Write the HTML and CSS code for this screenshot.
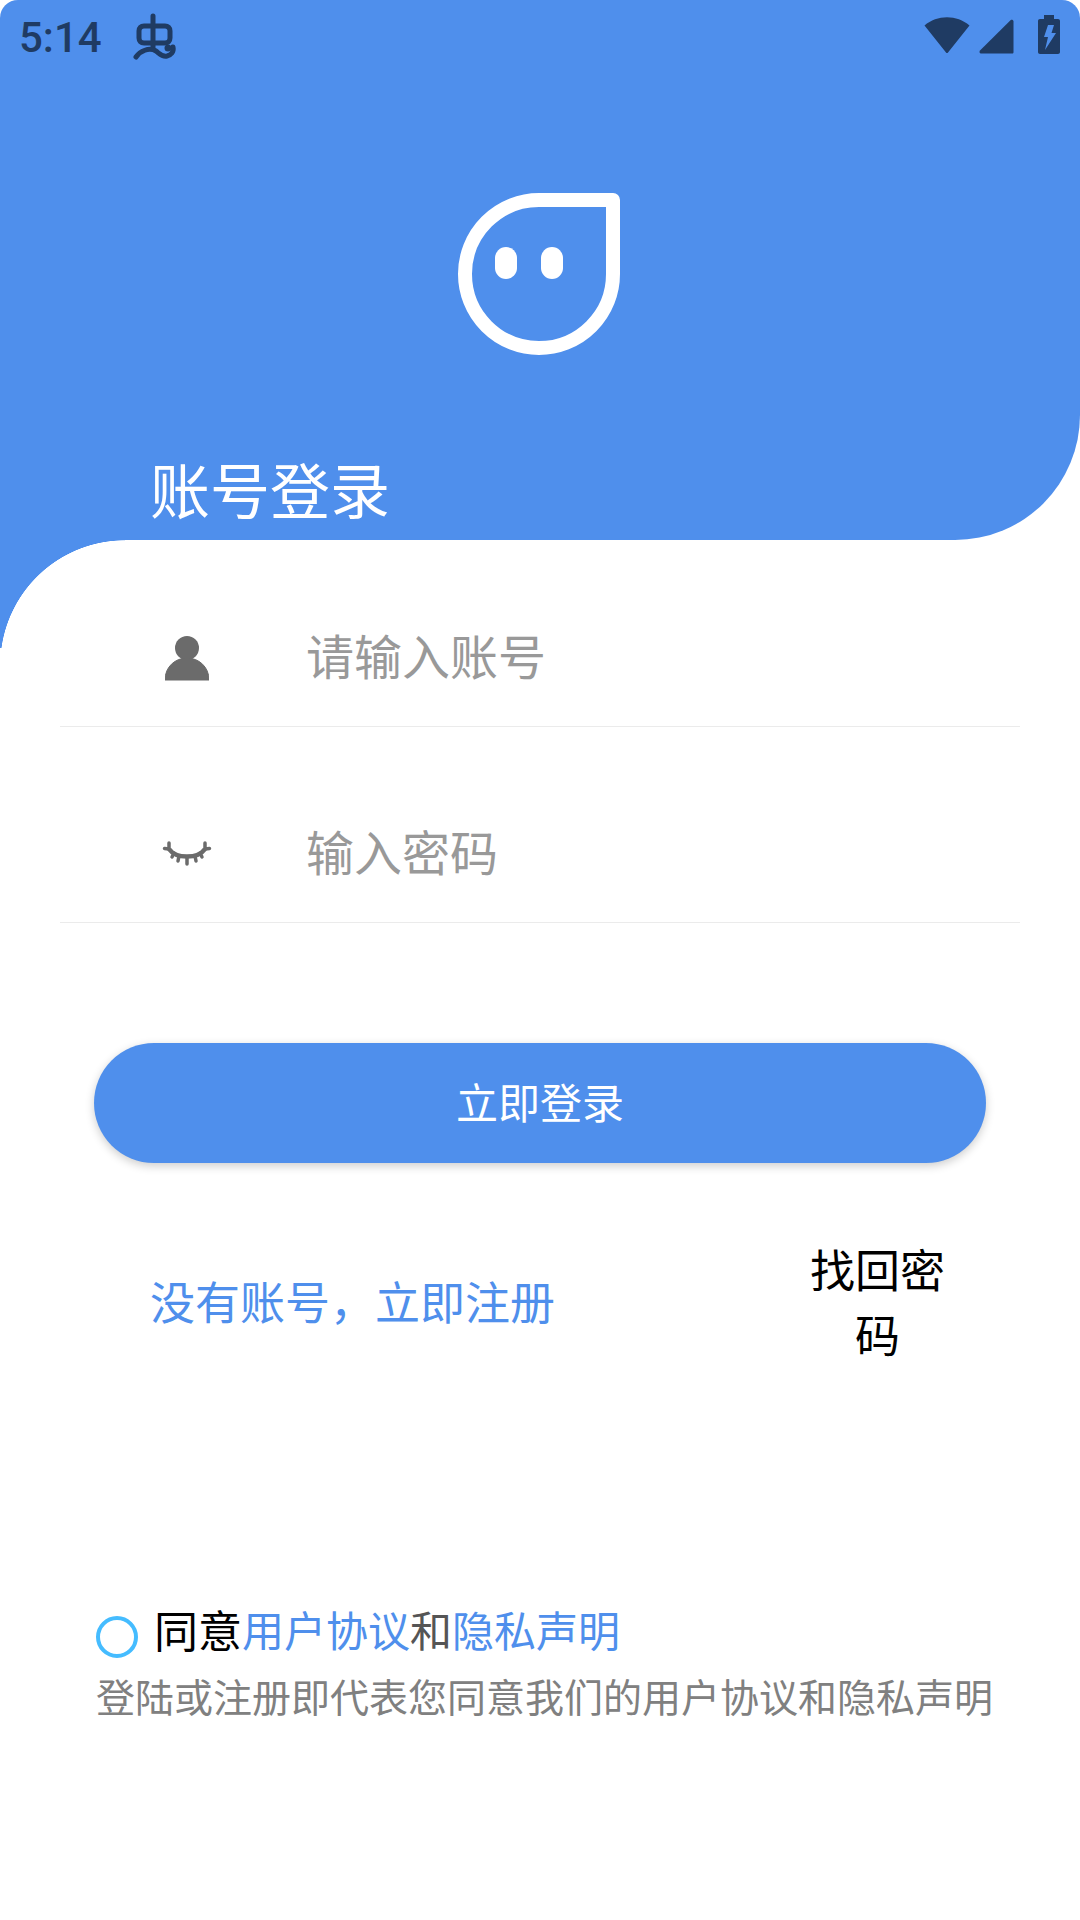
FILE: index.html
```html
<!DOCTYPE html>
<html>
<head>
  <title>账号登录</title>
  <link rel="stylesheet" href="styles.css">
</head>
<body>
  <div class="screen">
    <div class="header">
      <div class="status-bar">
        <span class="clock">5:14</span>
        <svg class="bug-icon" width="50" height="54" viewBox="0 0 50 54">
          <path d="M24 6V38M15 16H36C39 16 41 18 41 21V28C41 31 39 33 36 33H15C12 33 10 31 10 28V21C10 18 12 16 15 16Z" fill="none" stroke="#1f3b63" stroke-width="5" stroke-linecap="round"/>
          <path d="M7 47C11 41 20 37 27 41C31 44 33 47 38 46C42 45 45 42 44 37" fill="none" stroke="#1f3b63" stroke-width="5" stroke-linecap="round"/>
          <circle cx="39" cy="38" r="3.5" fill="#1f3b63"/>
        </svg>
        <div class="status-icons">
          <svg width="46" height="37" viewBox="0 0 46 37">
            <path d="M0.5 8.5C13 -2.5 33 -2.5 45.5 8.5L24 35.5C23.5 36.3 22.5 36.3 22 35.5Z" fill="#1f3b63"/>
          </svg>
          <svg class="signal" width="35" height="35" viewBox="0 0 35 35">
            <path d="M1 31.5L31.5 1.2C32.6 .3 34.5 1 34.5 2.5V33C34.5 34 34 34.5 33 34.5H2C.5 34.5 0 32.8 1 31.5Z" fill="#1f3b63"/>
          </svg>
          <svg width="22" height="39" viewBox="0 0 22 39">
            <path d="M6 0H16V4H20C21.2 4 22 4.8 22 6V37C22 38.2 21.2 39 20 39H2C.8 39 0 38.2 0 37V6C0 4.8 .8 4 2 4H6Z" fill="#1f3b63"/>
            <path d="M10 10H16L13.5 18H18L7 35L10 22H6Z" fill="#4f8fec"/>
          </svg>
        </div>
      </div>
      <svg class="logo" width="162" height="162" viewBox="0 0 162 162">
        <path d="M81 7H155V81A74 74 0 1 1 81 7Z" fill="none" stroke="#fff" stroke-width="14" stroke-linejoin="round"/>
        <rect x="37" y="54" width="22" height="32" rx="11" fill="#fff"/>
        <rect x="83" y="54" width="22" height="32" rx="11" fill="#fff"/>
      </svg>
      <h1 class="title">账号登录</h1>
    </div>

    <div class="form">
      <div class="field">
        <div class="field-icon">
          <svg width="44" height="45" viewBox="0 0 44 45">
            <circle cx="22" cy="12" r="12" fill="#6b6b6b"/>
            <path d="M0 44C0 31 10 22 22 22C34 22 44 31 44 44Z" fill="#6b6b6b" stroke="#6b6b6b" stroke-width="1" stroke-linejoin="round"/>
          </svg>
        </div>
        <span class="placeholder">请输入账号</span>
      </div>
      <div class="field">
        <div class="field-icon">
          <svg width="50" height="28" viewBox="0 0 50 28">
            <path d="M7 9C14 19 36 19 43 9" fill="none" stroke="#6b6b6b" stroke-width="4.5"/>
            <path d="M7 9L2.5 8.5M7 9L7 3M43 9L47.5 8.5M43 9L43 3M12 13L10 17M17 16L16 21M25 17L25 24M33 16L34 21M38 13L40 17" fill="none" stroke="#6b6b6b" stroke-width="3.5" stroke-linecap="round"/>
          </svg>
        </div>
        <span class="placeholder">输入密码</span>
      </div>

      <button class="login-btn">立即登录</button>

      <div class="links">
        <span class="register">没有账号，立即注册</span>
        <span class="forgot">找回密码</span>
      </div>

      <div class="agree">
        <div class="agree-line">
          <span class="radio"></span>
          <span class="agree-text">同意</span><span class="agree-link">用户协议</span><span class="agree-and">和</span><span class="agree-link">隐私声明</span>
        </div>
        <p class="agree-note">登陆或注册即代表您同意我们的用户协议和隐私声明</p>
      </div>
    </div>
  </div>
</body>
</html>
```

FILE: styles.css
```css
* {
  box-sizing: border-box;
}

body {
  margin: 0;
  background-color: #fff;
  font-family: "Noto Sans CJK SC", "Liberation Sans", sans-serif;
}

.screen {
  width: 1080px;
  height: 1920px;
  overflow: hidden;
  background-color: #fff;
}

.header {
  height: 540px;
  background-color: #4f8fec;
  border-top-left-radius: 18px;
  border-top-right-radius: 18px;
  border-bottom-right-radius: 125px;
  display: flex;
  flex-direction: column;
}

.status-bar {
  display: flex;
  align-items: center;
  height: 74px;
  padding: 0 20px 0 19px;
}

.clock {
  font-family: Roboto, sans-serif;
  font-size: 42px;
  font-weight: 500;
  color: #1f3b63;
  margin-right: 27px;
}

.status-icons {
  margin-left: auto;
  margin-bottom: 6px;
  display: flex;
  align-items: flex-end;
  gap: 9px;
}

.signal {
  margin-right: 15px;
}

.logo {
  display: block;
  margin: 119px 0 0 458px;
}

.title {
  margin: 93px 0 0 150px;
  font-size: 60px;
  font-weight: 400;
  line-height: 80px;
  color: #fff;
}

.form {
  height: 1380px;
  padding: 50px 60px 0;
  background: radial-gradient(125px 125px at 125px 125px, #fff 99.5%, #4f8fec 100%) no-repeat 0 0 / 125px 108px;
}

.field {
  display: flex;
  align-items: center;
  height: 137px;
  margin-bottom: 59px;
  border-bottom: 1px solid #ebebeb;
}

.field-icon {
  width: 246px;
  padding-left: 8px;
  display: flex;
  justify-content: center;
}

.placeholder {
  margin-bottom: 8px;
  font-size: 48px;
  color: #999;
}

.login-btn {
  display: block;
  width: 892px;
  height: 120px;
  margin: 120px 0 0 34px;
  padding-bottom: 6px;
  border: none;
  border-radius: 60px;
  background-color: #4f8fec;
  box-shadow: 0 3px 10px rgba(0, 0, 0, 0.2);
  color: #fff;
  font-family: inherit;
  font-size: 42px;
}

.links {
  display: flex;
  align-items: center;
  margin-top: 73px;
  padding-left: 90px;
}

.register {
  margin-bottom: 2px;
  font-size: 45px;
  color: #4f8fec;
  width: 660px;
}

.forgot {
  width: 135px;
  font-size: 45px;
  line-height: 65px;
  text-align: center;
  color: #000;
}

.agree {
  margin: 233px 0 0 36px;
}

.agree-line {
  display: flex;
  align-items: center;
  line-height: 60px;
}

.radio {
  width: 42px;
  height: 42px;
  margin: 15px 16px 0 0;
  border: 4px solid #45bcff;
  border-radius: 50%;
}

.agree-text {
  font-size: 44px;
  color: #000;
}

.agree-and {
  font-size: 42px;
  color: #555;
}

.agree-link {
  font-size: 42px;
  color: #4f8fec;
}

.agree-note {
  margin: 9px 0 0;
  font-size: 39px;
  line-height: 54px;
  color: #808080;
  white-space: nowrap;
}
```
